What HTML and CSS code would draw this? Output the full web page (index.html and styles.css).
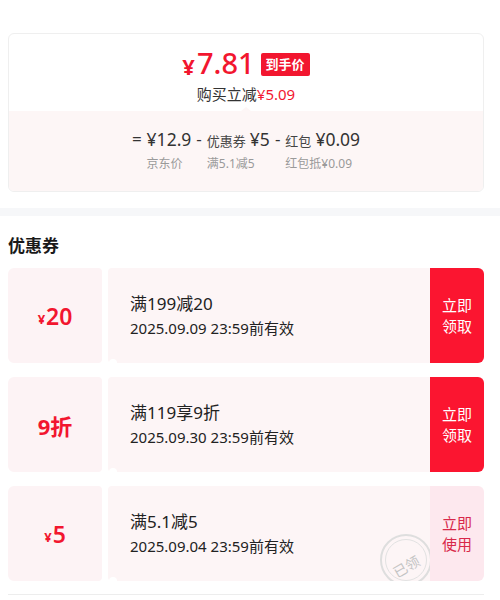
FILE: index.html
```html
<!DOCTYPE html>
<html lang="zh-CN">
<head>
<meta charset="utf-8">
<title>到手价</title>
<link rel="stylesheet" href="styles.css">
</head>
<body>
<div class="page">
  <div class="top-wrap">
    <section class="price-card">
      <div class="price-top">
        <div class="price-line">
          <span class="yen">¥</span><span class="amount">7.81</span><span class="badge">到手价</span>
        </div>
        <div class="save">购买立减<span class="red">¥5.09</span></div>
      </div>
      <div class="price-detail">
        <div class="formula">
          <span class="op">=</span>
          <div class="term">
            <div class="term-top"><span class="num">¥12.9</span></div>
            <div class="term-label">京东价</div>
          </div>
          <span class="op">-</span>
          <div class="term">
            <div class="term-top"><span class="lbl">优惠券</span><span class="num">¥5</span></div>
            <div class="term-label">满5.1减5</div>
          </div>
          <span class="op">-</span>
          <div class="term">
            <div class="term-top"><span class="lbl">红包</span><span class="num">¥0.09</span></div>
            <div class="term-label">红包抵¥0.09</div>
          </div>
        </div>
      </div>
    </section>
  </div>
  <div class="divider"></div>
  <section class="coupons">
    <h2 class="title">优惠券</h2>
    <div class="coupon-list">
      <div class="coupon">
        <div class="stub"><span class="c-yen">¥</span><span class="c-val">20</span></div>
        <div class="main">
          <div class="c-name">满199减20</div>
          <div class="c-date">2025.09.09 23:59前有效</div>
        </div>
        <div class="btn">立即<br>领取</div>
      </div>
      <div class="coupon">
        <div class="stub"><span class="c-val bold">9折</span></div>
        <div class="main">
          <div class="c-name">满119享9折</div>
          <div class="c-date">2025.09.30 23:59前有效</div>
        </div>
        <div class="btn">立即<br>领取</div>
      </div>
      <div class="coupon">
        <div class="stub"><span class="c-yen">¥</span><span class="c-val">5</span></div>
        <div class="main">
          <div class="c-name">满5.1减5</div>
          <div class="c-date">2025.09.04 23:59前有效</div>
          <div class="stamp"><span class="stamp-text">已领</span></div>
        </div>
        <div class="btn used">立即<br>使用</div>
      </div>
      <div class="list-end"></div>
    </div>
  </section>
</div>
</body>
</html>
```

FILE: styles.css
```css
html, body {
  margin: 0;
  padding: 0;
  background: #fff;
  overflow: hidden;
}
body {
  font-family: "Noto Sans", "Noto Sans CJK SC", sans-serif;
  color: #222;
}
.page {
  width: 500px;
}
.top-wrap {
  padding: 33px 16px 0 8px;
}
.price-card {
  border: 1px solid #efefef;
  border-radius: 6px;
  overflow: hidden;
  height: 157px;
  display: flex;
  flex-direction: column;
}
.price-top {
  height: 77px;
  display: flex;
  flex-direction: column;
  align-items: center;
  position: relative;
}
.price-top::after {
  content: "";
  position: absolute;
  left: 50%;
  bottom: 0;
  margin-left: -5px;
  border-left: 5px solid transparent;
  border-right: 5px solid transparent;
  border-bottom: 4px solid #fdf6f6;
}
.price-line {
  display: flex;
  align-items: center;
  height: 36px;
  margin-top: 11px;
  color: #f2162f;
}
.yen {
  font-size: 22px;
  font-weight: 700;
  margin-top: 5px;
  margin-right: 2px;
}
.amount {
  font-size: 29px;
  font-weight: 500;
  line-height: 36px;
}
.badge {
  margin-left: 6px;
  margin-top: 2px;
  background: #f2162f;
  color: #fff;
  font-size: 13px;
  font-weight: 700;
  height: 23px;
  line-height: 23px;
  padding: 0 5px;
  border-radius: 2px;
}
.save {
  margin-top: 3px;
  font-size: 15px;
  line-height: 20px;
  color: #333;
}
.red {
  color: #f2162f;
}
.price-detail {
  flex: 1;
  background: #fdf6f6;
  display: flex;
  justify-content: center;
  padding-top: 15px;
}
.formula {
  display: flex;
  align-items: flex-start;
  color: #333;
}
.op {
  font-size: 17px;
  line-height: 26px;
  padding: 0 5px;
}
.op:first-child {
  padding-left: 0;
}
.term-top {
  height: 26px;
  display: flex;
  align-items: baseline;
  white-space: nowrap;
}
.num {
  font-size: 17.5px;
  line-height: 26px;
}
.lbl {
  font-size: 13px;
  margin-right: 4px;
  color: #444;
}
.term-label {
  font-size: 12px;
  line-height: 18px;
  color: #9a9a9a;
  margin-top: 3px;
  white-space: nowrap;
}
.divider {
  height: 8px;
  margin-top: 16px;
  background: #f6f7f9;
}
.coupons {
  padding: 18px 16px 0 8px;
}
.title {
  margin: 0;
  font-size: 17px;
  line-height: 24px;
  font-weight: 700;
  color: #1a1a1a;
}
.coupon-list {
  margin-top: 10px;
  display: flex;
  flex-direction: column;
  gap: 14px;
}
.coupon {
  position: relative;
  display: flex;
  height: 95px;
}
.coupon::before,
.coupon::after {
  content: "";
  position: absolute;
  left: 101px;
  width: 8px;
  height: 8px;
  border-radius: 50%;
  background: #fff;
}
.coupon::before { top: -4px; }
.coupon::after { bottom: -4px; }
.stub {
  width: 94px;
  background: #fdf3f5;
  border-radius: 6px 4px 4px 6px;
  display: flex;
  align-items: center;
  justify-content: center;
  color: #f2162f;
}
.c-yen {
  font-size: 13px;
  font-weight: 700;
  margin-top: 6px;
  margin-right: 1px;
}
.c-val {
  font-size: 23px;
  font-weight: 600;
}
.c-val.bold {
  font-size: 22px;
  font-weight: 700;
}
.main {
  position: relative;
  overflow: hidden;
  flex: 1;
  margin-left: 6px;
  background: #fdf5f6;
  border-radius: 4px 0 0 4px;
  padding-left: 22px;
  display: flex;
  flex-direction: column;
  justify-content: center;
}
.c-name {
  font-size: 17px;
  line-height: 25px;
  color: #222;
}
.c-date {
  font-size: 15px;
  line-height: 24px;
  color: #222;
}
.btn {
  width: 54px;
  background: #fb1530;
  color: #fff;
  border-radius: 0 6px 6px 0;
  font-size: 15px;
  line-height: 21px;
  display: flex;
  align-items: center;
  justify-content: center;
  text-align: center;
}
.btn.used {
  background: #fde8ee;
  color: #d8284a;
}
.stamp {
  position: absolute;
  left: 272px;
  top: 48px;
  width: 48px;
  height: 48px;
  border: 2px solid #dedede;
  border-radius: 50%;
  display: flex;
  align-items: center;
  justify-content: center;
}
.stamp::before {
  content: "";
  position: absolute;
  inset: 3px;
  border: 1px solid #e2e2e2;
  border-radius: 50%;
}
.stamp-text {
  font-size: 14px;
  color: #c4c4c4;
  transform: rotate(-30deg);
  margin-top: 12px;
}
.list-end {
  height: 1px;
  background: #ededed;
  margin-top: -1px;
}
```
